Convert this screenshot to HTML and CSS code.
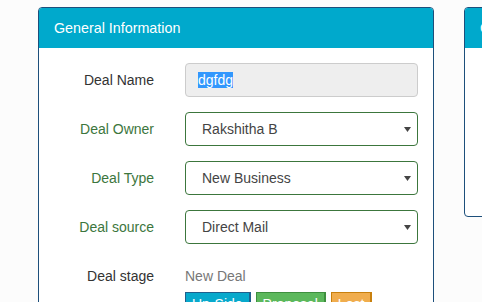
FILE: index.html
```html
<!DOCTYPE html>
<html lang="en">
<head>
    <meta charset="UTF-8">
    <title>Deal</title>
    <link rel="stylesheet" href="styles.css">
</head>
<body>
    <!-- general info panel -->
    <div class="panel">
        <div class="panel-heading">General Information</div>
        <div class="panel-body">
            <div class="form-row">
                <label class="label">Deal Name</label>
                <div class="input"><span class="selected">dgfdg</span></div>
            </div>
            <div class="form-row">
                <label class="label success">Deal Owner</label>
                <div class="select">
                    <span>Rakshitha B</span>
                    <svg class="caret" width="7" height="5" viewBox="0 0 7 5"><path d="M0 0h7L3.5 5z" fill="#444"/></svg>
                </div>
            </div>
            <div class="form-row">
                <label class="label success">Deal Type</label>
                <div class="select">
                    <span>New Business</span>
                    <svg class="caret" width="7" height="5" viewBox="0 0 7 5"><path d="M0 0h7L3.5 5z" fill="#444"/></svg>
                </div>
            </div>
            <div class="form-row">
                <label class="label success">Deal source</label>
                <div class="select">
                    <span>Direct Mail</span>
                    <svg class="caret" width="7" height="5" viewBox="0 0 7 5"><path d="M0 0h7L3.5 5z" fill="#444"/></svg>
                </div>
            </div>
            <div class="form-row">
                <label class="label">Deal stage</label>
                <div class="stage">
                    <div class="static">New Deal</div>
                    <div class="btns">
                        <button class="btn info">Up-Side</button>
                        <button class="btn success">Proposal</button>
                        <button class="btn warning">Lost</button>
                    </div>
                </div>
            </div>
        </div>
    </div>

    <!-- second panel, cut off -->
    <div class="panel short">
        <div class="panel-heading">Other Information</div>
        <div class="panel-body"></div>
    </div>
</body>
</html>
```

FILE: styles.css
```css
body {
    margin: 0;
    padding: 7px 0 0 38px;
    height: 302px;
    box-sizing: border-box;
    overflow: hidden;
    background: #fcfcfc;
    font-family: 'Liberation Sans', Arial, sans-serif;
    font-size: 14px;
    color: #333;
    display: flex;
    gap: 30px;
    align-items: flex-start;
}

/* panels */
.panel {
    flex: none;
    width: 396px;
    box-sizing: border-box;
    background: #fff;
    border: 1px solid #1d4f7b;
    border-radius: 4px;
    overflow: hidden;
}

.panel.short {
    height: 210px;
}

.panel-heading {
    background: #00a9cc;
    color: #fff;
    font-size: 14.3px;
    line-height: 20px;
    padding: 10px 15px;
    white-space: nowrap;
}

.panel-body {
    padding: 15px 15px 20px;
}

/* form rows */
.form-row {
    display: grid;
    grid-template-columns: 100px 233px;
    column-gap: 31px;
    margin-bottom: 15px;
}

.label {
    text-align: right;
    padding-top: 7px;
    line-height: 20px;
    color: #333;
}

.label.success {
    color: #3c763d;
}

.input {
    height: 34px;
    box-sizing: border-box;
    padding: 6px 12px;
    line-height: 20px;
    background: #eee;
    border: 1px solid #ccc;
    border-radius: 4px;
    color: #555;
}

.selected {
    background: #3297fd;
    color: #fff;
}

.select {
    height: 34px;
    box-sizing: border-box;
    padding: 0 6px 0 16px;
    display: flex;
    align-items: center;
    justify-content: space-between;
    border: 1px solid #3c763d;
    border-radius: 4px;
    color: #444;
}

.caret {
    margin-top: 1px;
}

/* stage */
.static {
    padding-top: 7px;
    line-height: 20px;
    color: #777;
}

.btns {
    display: flex;
    gap: 5px;
    margin-top: 6px;
}

.btn {
    font-family: inherit;
    font-size: 14px;
    line-height: 18px;
    padding: 2px 6px 4px;
    color: #fff;
    border: 1px solid;
    border-right-width: 2px;
    border-bottom-width: 2px;
    border-radius: 0;
}

.btn.info { background: #07a9cc; border-color: #205f8c; }
.btn.success { background: #5cb85c; border-color: #3e8f3e; }
.btn.warning { background: #f0ad4e; border-color: #c8800e; }
```
